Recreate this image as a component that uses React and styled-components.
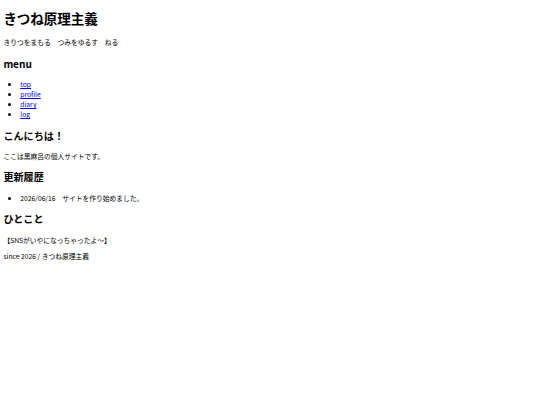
import React from "react";
import styled, { createGlobalStyle } from "styled-components";

const GlobalStyle = createGlobalStyle`
  html, body {
    background: #ffffff;
  }
  body {
    margin: 3.375px;
    font-family: "Noto Sans CJK JP", "Noto Sans", sans-serif;
    font-size: 6.75px;
    color: #000000;
  }
`;

const Page = styled.div``;

const SiteTitle = styled.h1`
  font-size: 2em;
  font-weight: bold;
  margin: 5px 0 0.67em;
`;

const SectionTitle = styled.h2`
  font-size: 1.5em;
  font-weight: bold;
  margin: 0.83em 0;
`;

const Text = styled.p`
  margin: 1em 0;
`;

const List = styled.ul`
  margin: 1em 0;
  padding-left: 2.5em;
  list-style: disc;
`;

const MenuLink = styled.a`
  color: #0000ee;
  text-decoration: underline;
`;

const Footer = styled.footer`
  margin: 1em 0;
`;

const menu = ["top", "profile", "diary", "log"];

const App = () => (
  <Page>
    <GlobalStyle />
    <header>
      <SiteTitle>きつね原理主義</SiteTitle>
      <Text>きりつをまもる　つみをゆるす　ねる</Text>
    </header>
    <nav>
      <SectionTitle>menu</SectionTitle>
      <List>
        {menu.map((item) => (
          <li key={item}>
            <MenuLink href="#">{item}</MenuLink>
          </li>
        ))}
      </List>
    </nav>
    <section>
      <SectionTitle>こんにちは！</SectionTitle>
      <Text>ここは黒麻呂の個人サイトです。</Text>
    </section>
    <section>
      <SectionTitle>更新履歴</SectionTitle>
      <List>
        <li>2026/06/16　サイトを作り始めました。</li>
      </List>
    </section>
    <section>
      <SectionTitle>ひとこと</SectionTitle>
      <Text>【SNSがいやになっちゃったよ〜】</Text>
    </section>
    <Footer>since 2026 / きつね原理主義</Footer>
  </Page>
);

export default App;
